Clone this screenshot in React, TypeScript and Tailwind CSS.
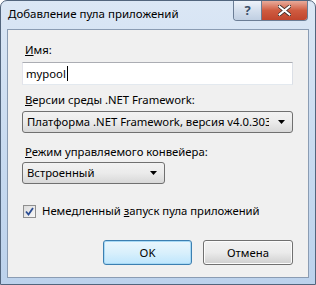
import React from "react";

const font = { fontFamily: '"Noto Sans", "Open Sans", sans-serif' };

function Arrow() {
  return (
    <svg width="7" height="4" viewBox="0 0 7 4" className="shrink-0">
      <path d="M0 0h7L3.5 4z" fill="#000" />
    </svg>
  );
}

function Select({ value, width }: { value: string; width: string }) {
  return (
    <div
      className={`${width} h-[22px] flex items-center rounded-[3px] border border-[#707070] bg-gradient-to-b from-[#f2f2f2] via-[#ebebeb] to-[#d8d8d8] pl-[4px] pr-[7px] overflow-hidden`}
    >
      <span className="flex-1 mr-[9px] whitespace-nowrap overflow-hidden text-[11.3px] leading-[16px] text-black">
        {value}
      </span>
      <Arrow />
    </div>
  );
}

export default function App() {
  return (
    <div
      className="w-[316px] h-[285px] flex flex-col rounded-t-[7px] border border-[#52657d] bg-gradient-to-b from-[#dbe7f5] via-[#c9dbf0] to-[#bcd2ec] overflow-hidden"
      style={font}
    >
      {/* Title bar */}
      <div className="h-[28px] flex items-start shrink-0">
        <div className="flex-1 pl-[7px] pt-[5px] text-[11.5px] leading-[16px] text-black whitespace-nowrap">
          Добавление пула приложений
        </div>
        <div className="flex mr-[7px] rounded-b-[4px] border border-t-0 border-[#6b7d95] overflow-hidden">
          <div className="w-[28px] h-[19px] flex items-center justify-center bg-gradient-to-b from-[#eef3fa] via-[#d4dfed] to-[#c0cfe2] border-r border-[#6b7d95] text-[13px] font-bold text-[#3d5069] leading-none">
            ?
          </div>
          <div className="w-[45px] h-[19px] flex items-center justify-center bg-gradient-to-b from-[#e8ab9b] via-[#cf5b40] to-[#c0452d]">
            <svg width="13" height="11" viewBox="0 0 13 11">
              <path
                d="M1 1l11 9M12 1L1 10"
                stroke="#3a2a26"
                strokeWidth="3.6"
                strokeLinecap="square"
              />
              <path
                d="M1.5 1.5l10 8M11.5 1.5l-10 8"
                stroke="#fff"
                strokeWidth="2"
                strokeLinecap="square"
              />
            </svg>
          </div>
        </div>
      </div>

      {/* Client area */}
      <div className="mx-[6px] h-[249px] border border-[#8a9cb3] bg-[#f0f0f0] flex flex-col px-[14px] pt-[12px] text-[11.3px] leading-[16px] text-black">
        <div className="pl-[3px]">
          <span className="underline">И</span>мя:
        </div>
        <div className="mt-[4px] h-[23px] w-[271px] border border-[#abadb3] border-b-[#e3e9ef] border-l-[#e2e3ea] border-r-[#dbdfe6] bg-white flex items-center pl-[3px]">
          <span>mypool</span>
          <span className="w-[1px] h-[15px] bg-black ml-[1px]" />
        </div>

        <div className="mt-[7px] pl-[3px]">
          <span className="underline">В</span>ерсии среды .NET Framework:
        </div>
        <div className="mt-[3px]">
          <Select value="Платформа .NET Framework, версия v4.0.30319" width="w-[271px]" />
        </div>

        <div className="mt-[11px] pl-[3px]">
          <span className="underline">Р</span>ежим управляемого конвейера:
        </div>
        <div className="mt-[2px]">
          <Select value="Встроенный" width="w-[143px]" />
        </div>

        <div className="mt-[19px] flex items-center pl-[1px]">
          <div className="w-[13px] h-[13px] border border-[#8f8f8f] bg-gradient-to-br from-[#dcdcdc] to-[#f8f8f8] p-[1px] flex items-center justify-center">
            <svg width="9" height="9" viewBox="0 0 9 9">
              <path d="M1 4.5l2.5 3L8 1" stroke="#2a4c93" strokeWidth="1.8" fill="none" />
            </svg>
          </div>
          <span className="ml-[6px]">
            Немедленный <span className="underline">з</span>апуск пула приложений
          </span>
        </div>

        <div className="mt-[21px] flex justify-end gap-[11px] pr-[1px]">
          <div className="w-[89px] h-[25px] rounded-[3px] border border-[#3c7fb1] bg-gradient-to-b from-[#eaf6fd] via-[#d9f0fc] to-[#bee6fd] shadow-[inset_0_0_0_1px_#a7d9f5] flex items-center justify-center">
            OK
          </div>
          <div className="w-[90px] h-[25px] rounded-[3px] border border-[#707070] bg-gradient-to-b from-[#f2f2f2] via-[#ebebeb] to-[#cfcfcf] shadow-[inset_0_0_0_1px_#fcfcfc] flex items-center justify-center">
            Отмена
          </div>
        </div>
      </div>
    </div>
  );
}
